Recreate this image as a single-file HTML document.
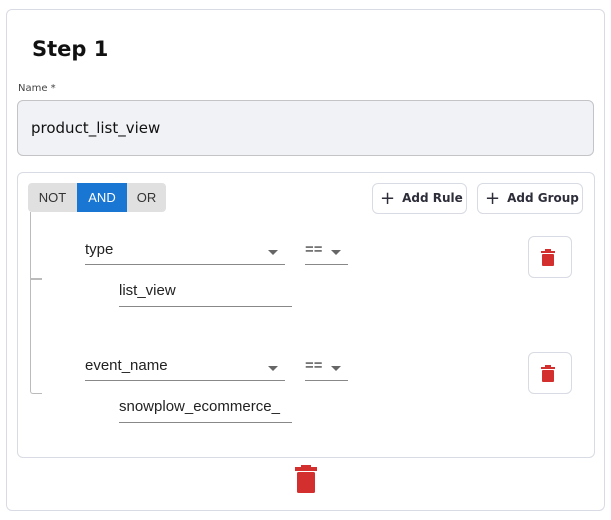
<!DOCTYPE html>
<html><head><style>
*{box-sizing:border-box;margin:0;padding:0}
body{width:611px;height:520px;background:#fff;font-family:"Liberation Sans",sans-serif;position:relative;overflow:hidden}
.a{position:absolute}
.card{left:6px;top:9px;width:599px;height:502px;border:1px solid #d8dbe3;border-radius:6px}
.title{left:32px;top:37px;font-size:21px;font-weight:bold;color:#111;font-family:"DejaVu Sans",sans-serif}
.lbl{left:18px;top:83px;font-size:10px;color:#444;font-family:"DejaVu Sans",sans-serif}
.inp{left:17px;top:100px;width:577px;height:56px;background:#f1f2f6;border:1px solid #c4c4c8;border-radius:6px}
.inpt{left:31px;top:119px;font-size:15px;color:#111;font-family:"DejaVu Sans",sans-serif}
.grp{left:17px;top:172px;width:578px;height:286px;border:1px solid #d8dbe3;border-radius:6px}
.tg{top:183px;height:29px;font-size:13px;line-height:29px;text-align:center;background:#e0e0e0;color:#333}
.btn{top:183px;height:31px;border:1px solid #d8dbe3;border-radius:6px;font-size:12px;font-weight:bold;color:#2e2e3a;line-height:29px;padding-left:7px;font-family:"DejaVu Sans",sans-serif;white-space:nowrap}
.btn span{font-size:18px;font-weight:normal;vertical-align:-2px;margin-right:7px}
.sel{height:1px;background:#888}
.txt{font-size:15px;color:#222}
.arr{width:0;height:0;border-left:5px solid transparent;border-right:5px solid transparent;border-top:5px solid #666}
.tb{width:44px;height:42px;border:1px solid #d8dbe3;border-radius:6px}
</style></head><body>
<div class="a card"></div>
<div class="a title">Step 1</div>
<div class="a lbl">Name *</div>
<div class="a inp"></div>
<div class="a inpt">product_list_view</div>
<div class="a grp"></div>
<div class="a tg" style="left:28px;width:49px;border-radius:4px 0 0 4px">NOT</div>
<div class="a tg" style="left:77px;width:50px;background:#1976d2;color:#fff">AND</div>
<div class="a tg" style="left:127px;width:39px;border-radius:0 4px 4px 0">OR</div>
<div class="a btn" style="left:372px;width:95px"><span>+</span>Add Rule</div>
<div class="a btn" style="left:477px;width:106px"><span>+</span>Add Group</div>
<div class="a" style="left:30px;top:212px;width:12px;height:182px;border-left:1.5px solid #bbb;border-bottom:1.5px solid #bbb;border-bottom-left-radius:3px"></div>
<div class="a" style="left:30px;top:278px;width:12px;height:1.5px;background:#bbb"></div>

<div class="a txt" style="left:85px;top:241px">type</div>
<div class="a arr" style="left:268px;top:250px"></div>
<div class="a sel" style="left:85px;top:264px;width:200px"></div>
<div class="a txt" style="left:305px;top:241px">==</div>
<div class="a arr" style="left:331px;top:250px"></div>
<div class="a sel" style="left:305px;top:264px;width:43px"></div>
<div class="a txt" style="left:119px;top:282px">list_view</div>
<div class="a sel" style="left:119px;top:306px;width:173px"></div>
<div class="a tb" style="left:528px;top:236px"></div>

<div class="a txt" style="left:85px;top:357px">event_name</div>
<div class="a arr" style="left:268px;top:366px"></div>
<div class="a sel" style="left:85px;top:380px;width:200px"></div>
<div class="a txt" style="left:305px;top:357px">==</div>
<div class="a arr" style="left:331px;top:366px"></div>
<div class="a sel" style="left:305px;top:380px;width:43px"></div>
<div class="a txt" style="left:119px;top:398px">snowplow_ecommerce_</div>
<div class="a sel" style="left:119px;top:422px;width:173px"></div>
<div class="a tb" style="left:528px;top:352px"></div>

<svg class="a" style="left:541px;top:249px" width="14" height="17" viewBox="0 0 14 17"><rect x="4" y="0" width="6" height="2" fill="#d32f2f"/><rect x="0" y="2" width="14" height="2" fill="#d32f2f"/><rect x="1" y="5" width="12" height="12" rx="1" fill="#d32f2f"/></svg>
<svg class="a" style="left:541px;top:365px" width="14" height="17" viewBox="0 0 14 17"><rect x="4" y="0" width="6" height="2" fill="#d32f2f"/><rect x="0" y="2" width="14" height="2" fill="#d32f2f"/><rect x="1" y="5" width="12" height="12" rx="1" fill="#d32f2f"/></svg>
<svg class="a" style="left:295px;top:465px" width="22" height="29" viewBox="0 0 22 29"><rect x="6" y="0" width="10" height="3" fill="#d32f2f"/><rect x="0" y="2" width="22" height="4" fill="#d32f2f"/><rect x="2" y="7" width="18" height="21" rx="1.5" fill="#d32f2f"/></svg>
</body></html>
